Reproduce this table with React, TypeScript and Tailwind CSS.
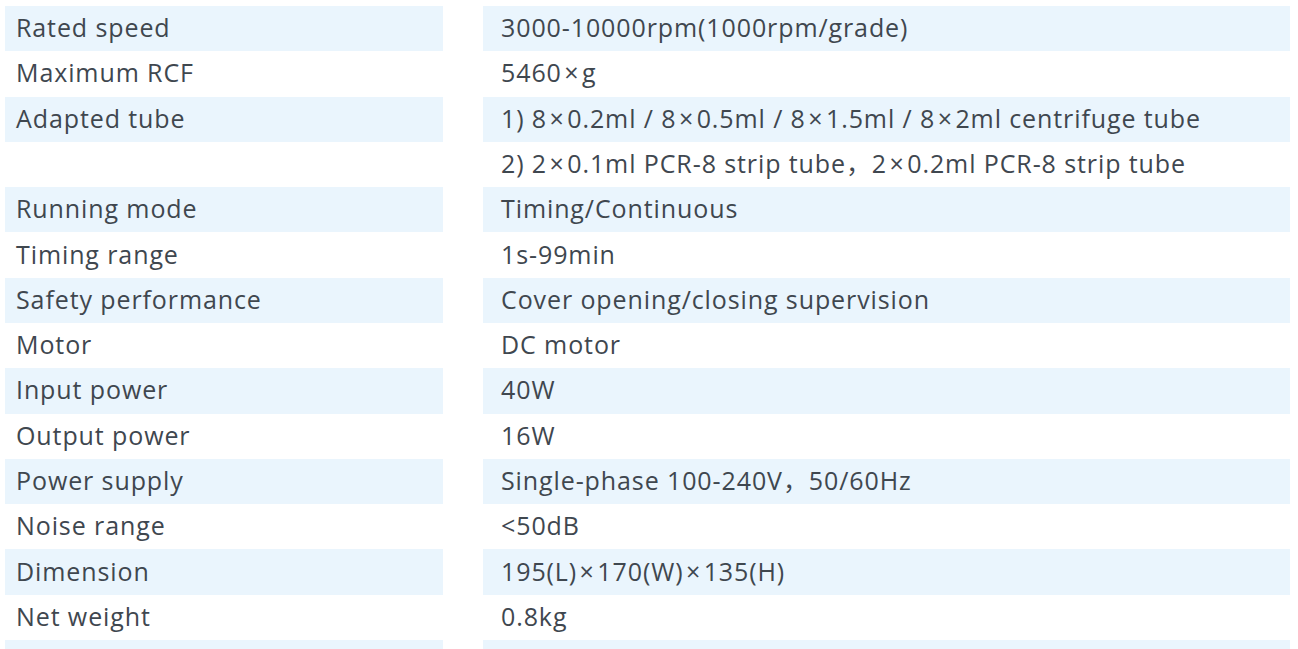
import React from "react";

const rows: [string, string][] = [
  ["Rated speed", "3000-10000rpm(1000rpm/grade)"],
  ["Maximum RCF", "5460×g"],
  ["Adapted tube", "1) 8×0.2ml / 8×0.5ml / 8×1.5ml / 8×2ml centrifuge tube"],
  ["", "2) 2×0.1ml PCR-8 strip tube，2×0.2ml PCR-8 strip tube"],
  ["Running mode", "Timing/Continuous"],
  ["Timing range", "1s-99min"],
  ["Safety performance", "Cover opening/closing supervision"],
  ["Motor", "DC motor"],
  ["Input power", "40W"],
  ["Output power", "16W"],
  ["Power supply", "Single-phase 100-240V，50/60Hz"],
  ["Noise range", "<50dB"],
  ["Dimension", "195(L)×170(W)×135(H)"],
  ["Net weight", "0.8kg"],
  ["", ""],
];

function Value({ text }: { text: string }) {
  const parts = text.split("×");
  return (
    <>
      {parts.map((p, i) => (
        <React.Fragment key={i}>
          {i > 0 && <span className="mx-[2.5px]">×</span>}
          {p}
        </React.Fragment>
      ))}
    </>
  );
}

export default function App() {
  return (
    <div
      className="w-[1298px] h-[649px] overflow-hidden bg-white pt-[6px] pl-[5px] text-[#3f474f] text-[25px] tracking-[0.9px]"
      style={{ fontFamily: '"Open Sans", "Noto Sans CJK SC", sans-serif' }}
    >
      <div className="flex flex-col">
        {rows.map(([k, v], i) => {
          const shaded = i % 2 === 0;
          return (
            <div key={i} className="flex h-[45.29px] gap-[40px]">
              <div
                className={
                  "w-[438px] flex items-center pl-[11px] pb-[2px] leading-none " +
                  (shaded ? "bg-[#eaf5fd]" : "bg-white")
                }
              >
                {k}
              </div>
              <div
                className={
                  "w-[807px] flex items-center pl-[18px] pb-[2px] leading-none whitespace-nowrap " +
                  (shaded ? "bg-[#eaf5fd]" : "bg-white")
                }
              >
                <Value text={v} />
              </div>
            </div>
          );
        })}
      </div>
    </div>
  );
}
